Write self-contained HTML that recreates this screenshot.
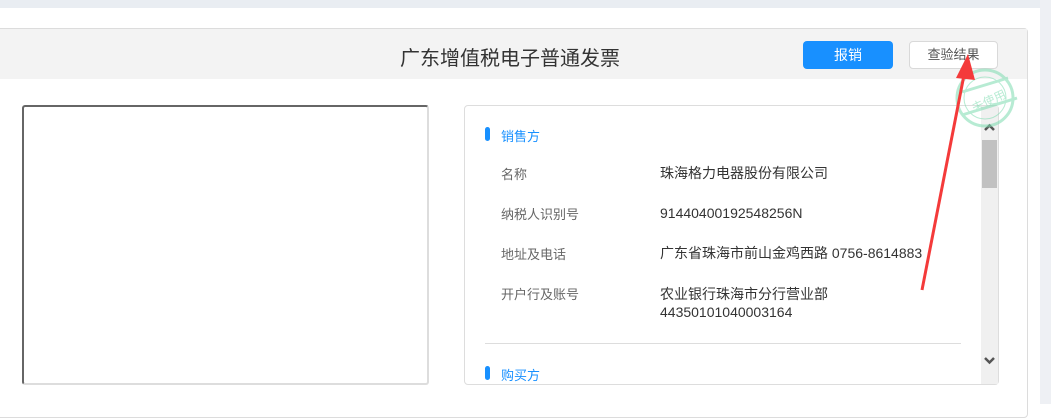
<!DOCTYPE html>
<html><head><meta charset="utf-8"><style>
*{margin:0;padding:0;box-sizing:border-box}
body{width:1051px;height:404px;overflow:hidden;background:#fff;font-family:"Liberation Sans","Noto Sans CJK SC",sans-serif;position:relative}
.abs{position:absolute}
.lbl{position:absolute;left:501px;font-size:13px;color:#666}
.val{position:absolute;left:660px;font-size:14px;color:#333;line-height:18px}
</style></head><body>
<div class="abs" style="left:0;top:0;width:1051px;height:8px;background:#e9edf2"></div>
<div class="abs" style="left:1040px;top:0;width:11px;height:404px;background:#eef0f4"></div>
<div class="abs" style="left:-5px;top:28px;width:1033px;height:390px;border:1px solid #dcdcdc;border-radius:4px;background:#fff"></div>
<div class="abs" style="left:0;top:29px;width:1027px;height:50px;background:#f3f3f3"></div>
<div class="abs" style="left:400px;top:42px;font-size:20px;color:#333">广东增值税电子普通发票</div>
<div class="abs" style="left:803px;top:41px;width:90px;height:28px;background:#1890ff;border-radius:4px;color:#fff;font-size:14px;text-align:center;line-height:28px">报销</div>
<div class="abs" style="left:909px;top:41px;width:89px;height:28px;background:#fff;border:1px solid #d9d9d9;border-radius:4px;color:#555;font-size:13px;text-align:center;line-height:26px">查验结果</div>
<div class="abs" style="left:22px;top:105px;width:407px;height:280px;border:2px solid #ddd;border-top-color:#666;border-left-color:#666;border-radius:3px"></div>
<div class="abs" style="left:464px;top:105px;width:535px;height:280px;border:1px solid #ddd;border-radius:4px"></div>
<div class="abs" style="left:981px;top:106px;width:17px;height:278px;background:#f0f0f0"></div>
<div class="abs" style="left:982px;top:140px;width:15px;height:48px;background:#c1c1c1"></div>
<svg class="abs" style="left:981px;top:120px" width="17" height="264">
<path d="M4 10 L8.5 5.5 L13 10" stroke="#555" stroke-width="2.5" fill="none"/>
<path d="M4 238 L8.5 242.5 L13 238" stroke="#555" stroke-width="2.5" fill="none"/>
</svg>
<div class="abs" style="left:485px;top:127px;width:5px;height:14px;background:#1890ff;border-radius:3px"></div>
<div class="abs" style="left:501px;top:126px;font-size:13px;color:#1890ff">销售方</div>
<div class="lbl" style="top:164px">名称</div><div class="val" style="top:164px">珠海格力电器股份有限公司</div>
<div class="lbl" style="top:204px">纳税人识别号</div><div class="val" style="top:204px">91440400192548256N</div>
<div class="lbl" style="top:244px">地址及电话</div><div class="val" style="top:244px">广东省珠海市前山金鸡西路 0756-8614883</div>
<div class="lbl" style="top:284px">开户行及账号</div><div class="val" style="top:285px">农业银行珠海市分行营业部<br>44350101040003164</div>
<div class="abs" style="left:485px;top:343px;width:476px;height:1px;background:#ddd"></div>
<div class="abs" style="left:485px;top:366px;width:5px;height:14px;background:#1890ff;border-radius:3px"></div>
<div class="abs" style="left:501px;top:365px;font-size:13px;color:#1890ff">购买方</div>
<svg class="abs" style="left:0;top:0" width="1051" height="404">
<g opacity="0.55" stroke="#7ddcb0" fill="none">
<circle cx="985" cy="98" r="28" stroke-width="3"/>
<circle cx="985" cy="98" r="21" stroke-width="1"/>
<line x1="962" y1="92" x2="1008" y2="78" stroke-width="3"/>
<line x1="962" y1="115" x2="1017" y2="98" stroke-width="3"/>
<text x="971" y="107" font-size="12" fill="#7ddcb0" stroke="none" transform="rotate(-25 985 102)" font-family="Noto Sans CJK SC">未使用</text>
</g>
<line x1="922" y1="290" x2="964" y2="75" stroke="#f43a3a" stroke-width="3"/>
<polygon points="968,54 956,78 975,80" fill="#f43a3a"/>
</svg>
</body></html>
